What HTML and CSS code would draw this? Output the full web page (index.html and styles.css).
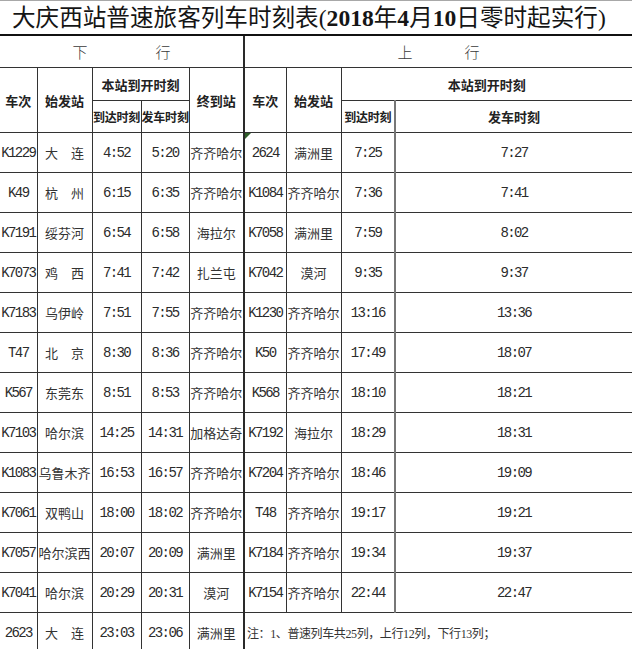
FILE: index.html
```html
<!DOCTYPE html>
<html lang="zh-CN">
<head>
<meta charset="utf-8">
<title>大庆西站普速旅客列车时刻表</title>
<link rel="stylesheet" href="styles.css">
</head>
<body>
<table class="sched">
  <colgroup>
    <col class="w37"><col class="w55"><col class="w49"><col class="w48"><col class="w55">
    <col class="w42"><col class="w55"><col class="w54"><col class="w237">
  </colgroup>
  <tr class="r-title">
    <td colspan="9" class="title">大庆西站普速旅客列车时刻表(<span class="tn">2018</span>年<span class="tn">4</span>月<span class="tn">10</span>日零时起实行)</td>
  </tr>
  <tr class="r-dir">
    <td colspan="5" class="dir first mid"><div class="dir-in"><span>下</span><span>行</span></div></td>
    <td colspan="4" class="dir last mid2"><div class="dir-in up"><span>上</span><span>行</span></div></td>
  </tr>
  <tr class="r-h1">
    <td rowspan="2" class="hd first">车次</td>
    <td rowspan="2" class="hd">始发站</td>
    <td colspan="2" class="hd">本站到开时刻</td>
    <td rowspan="2" class="hd mid">终到站</td>
    <td rowspan="2" class="hd mid2">车次</td>
    <td rowspan="2" class="hd">始发站</td>
    <td colspan="2" class="hd last">本站到开时刻</td>
  </tr>
  <tr class="r-h2">
    <td class="hd small">到达时刻</td>
    <td class="hd small">发车时刻</td>
    <td class="hd small sep">到达时刻</td>
    <td class="hd last sep2">发车时刻</td>
  </tr>
  <tr class="row">
    <td class="num first">K1229</td><td class="cn">大　连</td><td class="num">4:52</td><td class="num">5:20</td><td class="cn mid">齐齐哈尔</td>
    <td class="num mid2 flag">2624</td><td class="cn">满洲里</td><td class="num sep">7:25</td><td class="num last sep2">7:27</td>
  </tr>
  <tr class="row">
    <td class="num first">K49</td><td class="cn">杭　州</td><td class="num">6:15</td><td class="num">6:35</td><td class="cn mid">齐齐哈尔</td>
    <td class="num mid2">K1084</td><td class="cn">齐齐哈尔</td><td class="num sep">7:36</td><td class="num last sep2">7:41</td>
  </tr>
  <tr class="row">
    <td class="num first">K7191</td><td class="cn">绥芬河</td><td class="num">6:54</td><td class="num">6:58</td><td class="cn mid">海拉尔</td>
    <td class="num mid2">K7058</td><td class="cn">满洲里</td><td class="num sep">7:59</td><td class="num last sep2">8:02</td>
  </tr>
  <tr class="row">
    <td class="num first">K7073</td><td class="cn">鸡　西</td><td class="num">7:41</td><td class="num">7:42</td><td class="cn mid">扎兰屯</td>
    <td class="num mid2">K7042</td><td class="cn">漠河</td><td class="num sep">9:35</td><td class="num last sep2">9:37</td>
  </tr>
  <tr class="row">
    <td class="num first">K7183</td><td class="cn">乌伊岭</td><td class="num">7:51</td><td class="num">7:55</td><td class="cn mid">齐齐哈尔</td>
    <td class="num mid2">K1230</td><td class="cn">齐齐哈尔</td><td class="num sep">13:16</td><td class="num last sep2">13:36</td>
  </tr>
  <tr class="row">
    <td class="num first">T47</td><td class="cn">北　京</td><td class="num">8:30</td><td class="num">8:36</td><td class="cn mid">齐齐哈尔</td>
    <td class="num mid2">K50</td><td class="cn">齐齐哈尔</td><td class="num sep">17:49</td><td class="num last sep2">18:07</td>
  </tr>
  <tr class="row">
    <td class="num first">K567</td><td class="cn">东莞东</td><td class="num">8:51</td><td class="num">8:53</td><td class="cn mid">齐齐哈尔</td>
    <td class="num mid2">K568</td><td class="cn">齐齐哈尔</td><td class="num sep">18:10</td><td class="num last sep2">18:21</td>
  </tr>
  <tr class="row">
    <td class="num first">K7103</td><td class="cn">哈尔滨</td><td class="num">14:25</td><td class="num">14:31</td><td class="cn mid">加格达奇</td>
    <td class="num mid2">K7192</td><td class="cn">海拉尔</td><td class="num sep">18:29</td><td class="num last sep2">18:31</td>
  </tr>
  <tr class="row">
    <td class="num first">K1083</td><td class="cn">乌鲁木齐</td><td class="num">16:53</td><td class="num">16:57</td><td class="cn mid">齐齐哈尔</td>
    <td class="num mid2">K7204</td><td class="cn">齐齐哈尔</td><td class="num sep">18:46</td><td class="num last sep2">19:09</td>
  </tr>
  <tr class="row">
    <td class="num first">K7061</td><td class="cn">双鸭山</td><td class="num">18:00</td><td class="num">18:02</td><td class="cn mid">齐齐哈尔</td>
    <td class="num mid2">T48</td><td class="cn">齐齐哈尔</td><td class="num sep">19:17</td><td class="num last sep2">19:21</td>
  </tr>
  <tr class="row">
    <td class="num first">K7057</td><td class="cn">哈尔滨西</td><td class="num">20:07</td><td class="num">20:09</td><td class="cn mid">满洲里</td>
    <td class="num mid2">K7184</td><td class="cn">齐齐哈尔</td><td class="num sep">19:34</td><td class="num last sep2">19:37</td>
  </tr>
  <tr class="row">
    <td class="num first">K7041</td><td class="cn">哈尔滨</td><td class="num">20:29</td><td class="num">20:31</td><td class="cn mid">漠河</td>
    <td class="num mid2">K7154</td><td class="cn">齐齐哈尔</td><td class="num sep">22:44</td><td class="num last sep2">22:47</td>
  </tr>
  <tr class="row">
    <td class="num first">2623</td><td class="cn">大　连</td><td class="num">23:03</td><td class="num">23:06</td><td class="cn mid">满洲里</td>
    <td colspan="4" class="note last mid2">注：<span class="nn">1</span>、普速列车共<span class="nn">25</span>列，上行<span class="nn">12</span>列，下行<span class="nn">13</span>列；</td>
  </tr>
</table>
</body>
</html>
```

FILE: styles.css
```css
html, body {
  margin: 0;
  padding: 0;
  background: #ffffff;
}

body {
  overflow: hidden;
}

.sched {
  border-collapse: collapse;
  table-layout: fixed;
  width: 632px;
  font-family: "Noto Sans CJK SC", sans-serif;
  color: #2b2b2b;
}

.w37 { width: 37px; }
.w55 { width: 55px; }
.w49 { width: 49px; }
.w48 { width: 48px; }
.w42 { width: 42px; }
.w54 { width: 54px; }
.w237 { width: 237px; }

.sched td {
  border: 1px solid #333333;
  padding: 0;
  text-align: center;
  vertical-align: middle;
  white-space: nowrap;
  overflow: hidden;
}

.sched td.first { border-left: none; }
.sched td.last { border-right: none; }
.sched td.mid { border-right: 2px solid #2a2a2a; }
.sched td.mid2 { border-left: 2px solid #2a2a2a; }
.sched td.sep { border-right: 2px solid #777777; }
.sched td.sep2 { border-left: 2px solid #777777; }

.r-title td.title {
  height: 33px;
  border-top: 1px solid #a8a8a8;
  border-left: none;
  border-right: none;
  border-bottom: 2px solid #111111;
  padding-left: 12px;
  text-align: left;
  font-family: "Liberation Serif", "Noto Sans CJK SC", serif;
  font-size: 23.6px;
  font-weight: 400;
  color: #151515;
  line-height: 30px;
}

.tn {
  font-weight: 700;
}

.r-dir td { height: 31px; }

.dir {
  font-size: 15px;
  font-weight: 300;
  color: #3a3a3a;
}

.dir-in {
  display: flex;
  justify-content: center;
  gap: 68px;
}

.dir-in.up {
  gap: 52px;
}

.r-h1 td { height: 32px; }
.r-h2 td { height: 31px; }

.hd {
  font-size: 13px;
  font-weight: 700;
  color: #222222;
}

.sched td.small {
  font-size: 12px;
  letter-spacing: -0.2px;
}

.row td { height: 39px; }

.num {
  font-family: "Liberation Mono", monospace;
  font-size: 14px;
  letter-spacing: -1.6px;
  color: #2b2b2b;
}

.cn {
  font-size: 13px;
  color: #333333;
}

.sched td.note {
  text-align: left;
  padding-left: 2px;
  font-size: 12px;
  color: #333333;
  letter-spacing: -0.4px;
}

.nn {
  font-family: "Liberation Serif", serif;
  font-size: 12px;
}

.sched td.flag {
  position: relative;
}

.flag::before {
  content: "";
  position: absolute;
  left: 0;
  top: 0;
  border-top: 6px solid #2f5e2a;
  border-right: 6px solid transparent;
}
```
